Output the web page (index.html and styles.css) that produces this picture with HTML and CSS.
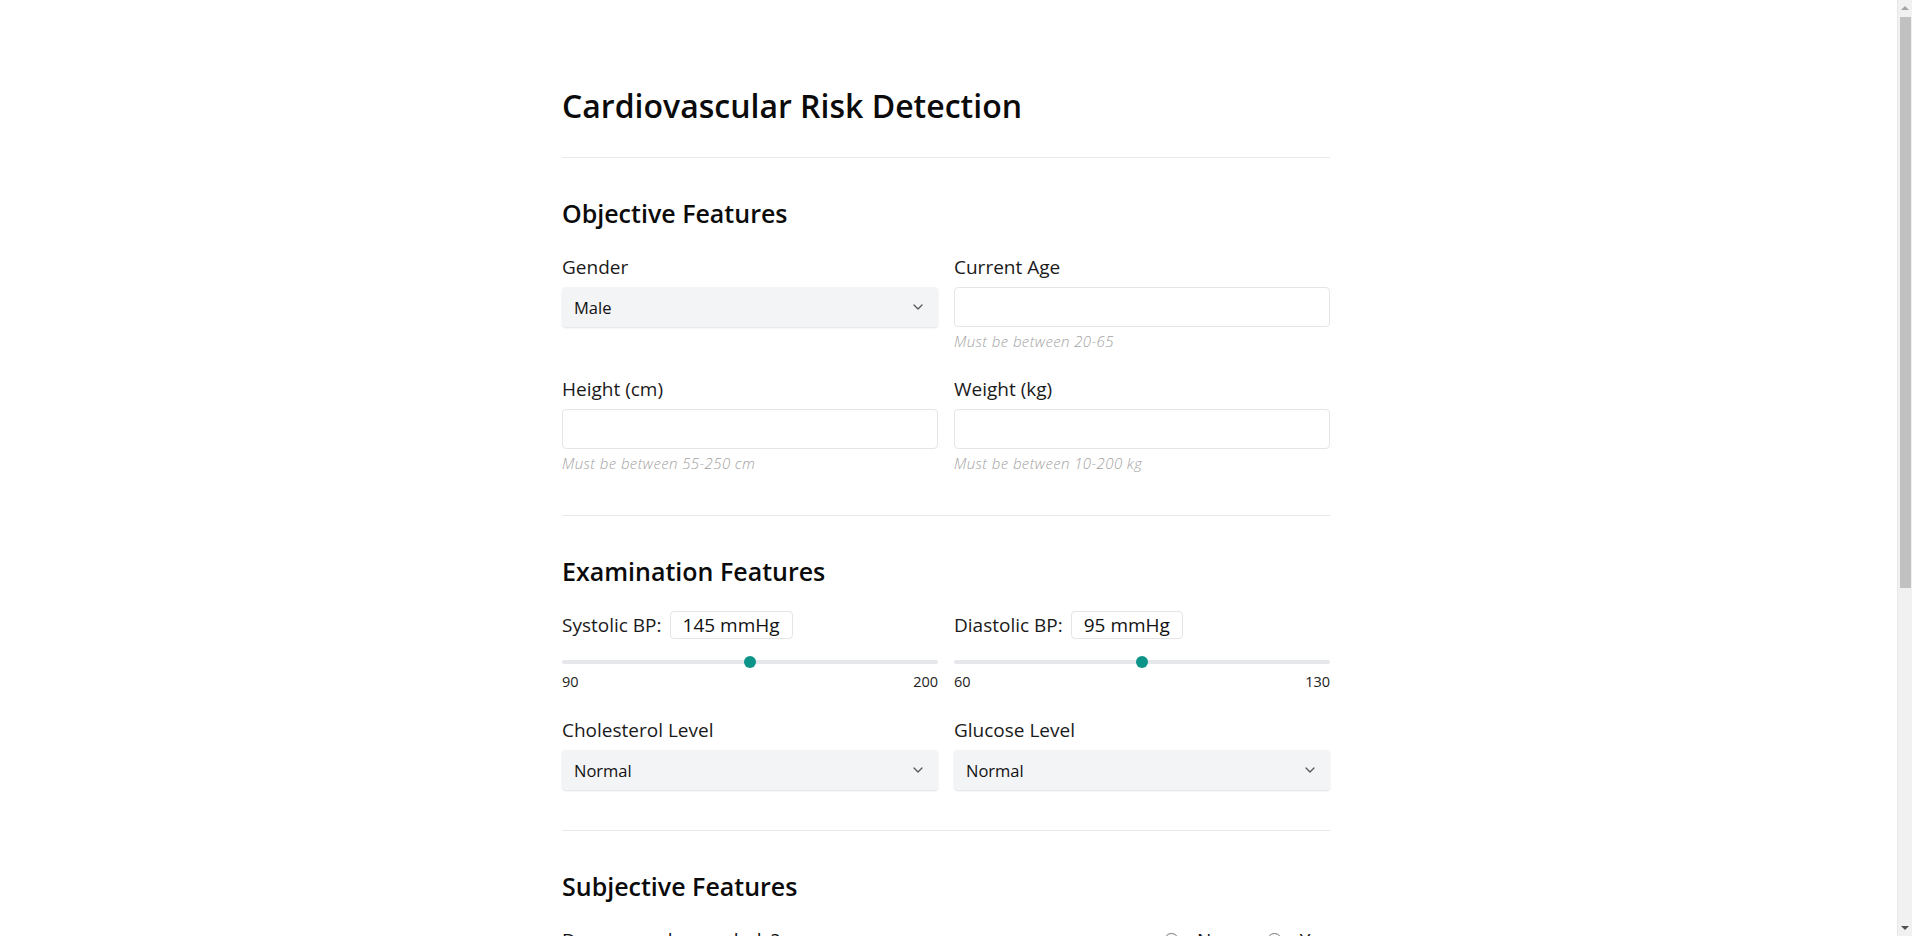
FILE: index.html
```html
<!DOCTYPE html>
<html lang="en">
<head>
<meta charset="utf-8">
<title>Cardiovascular Risk Detection</title>
<link rel="stylesheet" href="styles.css">
</head>
<body>
<main class="page">
  <h1 class="title">Cardiovascular Risk Detection</h1>
  <hr class="divider">

  <section class="section section-first">
    <h2 class="section-title">Objective Features</h2>
    <div class="grid">
      <div class="field">
        <label class="label" for="gender">Gender</label>
        <div class="select-wrap">
          <select id="gender" class="select"><option>Male</option><option>Female</option></select>
          <svg class="chevron" viewBox="0 0 20 20" width="16" height="16"><path d="M5 7.5l5 5 5-5" fill="none" stroke="currentColor" stroke-width="1.6" stroke-linecap="round" stroke-linejoin="round"/></svg>
        </div>
      </div>
      <div class="field">
        <label class="label" for="age">Current Age</label>
        <input id="age" class="input" type="text">
        <p class="hint">Must be between 20-65</p>
      </div>
      <div class="field">
        <label class="label" for="height">Height (cm)</label>
        <input id="height" class="input" type="text">
        <p class="hint">Must be between 55-250 cm</p>
      </div>
      <div class="field">
        <label class="label" for="weight">Weight (kg)</label>
        <input id="weight" class="input" type="text">
        <p class="hint">Must be between 10-200 kg</p>
      </div>
    </div>
  </section>
  <hr class="divider">

  <section class="section">
    <h2 class="section-title">Examination Features</h2>
    <div class="grid">
      <div class="field">
        <div class="bp-row">
          <span class="bp-label">Systolic BP:</span>
          <span class="bp-value">145 mmHg</span>
        </div>
        <input class="range" type="range" min="90" max="200" value="145">
        <div class="range-scale"><span>90</span><span>200</span></div>
      </div>
      <div class="field">
        <div class="bp-row">
          <span class="bp-label">Diastolic BP:</span>
          <span class="bp-value">95 mmHg</span>
        </div>
        <input class="range" type="range" min="60" max="130" value="95">
        <div class="range-scale"><span>60</span><span>130</span></div>
      </div>
      <div class="field">
        <label class="label" for="chol">Cholesterol Level</label>
        <div class="select-wrap">
          <select id="chol" class="select"><option>Normal</option><option>Above Normal</option><option>Well Above Normal</option></select>
          <svg class="chevron" viewBox="0 0 20 20" width="16" height="16"><path d="M5 7.5l5 5 5-5" fill="none" stroke="currentColor" stroke-width="1.6" stroke-linecap="round" stroke-linejoin="round"/></svg>
        </div>
      </div>
      <div class="field">
        <label class="label" for="gluc">Glucose Level</label>
        <div class="select-wrap">
          <select id="gluc" class="select"><option>Normal</option><option>Above Normal</option><option>Well Above Normal</option></select>
          <svg class="chevron" viewBox="0 0 20 20" width="16" height="16"><path d="M5 7.5l5 5 5-5" fill="none" stroke="currentColor" stroke-width="1.6" stroke-linecap="round" stroke-linejoin="round"/></svg>
        </div>
      </div>
    </div>
  </section>
  <hr class="divider">

  <section class="section">
    <h2 class="section-title">Subjective Features</h2>
    <div class="questions">
      <div class="question">
        <span class="q-text">Do you smoke regularly?</span>
        <div class="radios">
          <label class="radio"><input type="radio" name="smoke"><span>No</span></label>
          <label class="radio"><input type="radio" name="smoke"><span>Yes</span></label>
        </div>
      </div>
      <div class="question">
        <span class="q-text">Do you drink alcohol regularly?</span>
        <div class="radios">
          <label class="radio"><input type="radio" name="alco"><span>No</span></label>
          <label class="radio"><input type="radio" name="alco"><span>Yes</span></label>
        </div>
      </div>
      <div class="question">
        <span class="q-text">Are you physically active?</span>
        <div class="radios">
          <label class="radio"><input type="radio" name="active"><span>No</span></label>
          <label class="radio"><input type="radio" name="active"><span>Yes</span></label>
        </div>
      </div>
    </div>
  </section>
  <div class="actions">
    <button class="submit" type="button">Predict Risk</button>
  </div>
</main>
<div class="scrollbar" aria-hidden="true">
  <span class="sb-arrow sb-up"></span>
  <span class="sb-thumb"></span>
  <span class="sb-rest"></span>
  <span class="sb-arrow sb-down"></span>
</div>
</body>
</html>
```

FILE: styles.css
```css
* { box-sizing: border-box; }
html, body { margin: 0; padding: 0; background: #ffffff; }
body {
  font-family: "Open Sans", "Noto Sans", sans-serif;
  color: #111111;
  padding-right: 20px;
}
.page {
  max-width: 768px;
  margin: 0 auto;
  padding: 88px 0 120px;
}
.title {
  margin: 0 0 33px;
  font-size: 32px;
  line-height: 36px;
  font-weight: 600;
  color: #0b0b0b;
}
.divider {
  border: 0;
  border-top: 1px solid #e8e8e8;
  margin: 0;
}
.section {
  padding: 39px 0 40px;
}
.section-first { padding-bottom: 42px; }
.section-title {
  margin: 0 0 24px;
  font-size: 25px;
  line-height: 32px;
  font-weight: 600;
  color: #0b0b0b;
}
.grid {
  display: grid;
  grid-template-columns: 1fr 1fr;
  column-gap: 16px;
  row-gap: 24px;
}
.field { display: flex; flex-direction: column; min-width: 0; }
.label {
  font-size: 19px;
  line-height: 28px;
  color: #1a1a1a;
  margin-bottom: 6px;
}
.select-wrap { position: relative; }
.select {
  appearance: none;
  -webkit-appearance: none;
  width: 100%;
  height: 40px;
  border: 0;
  border-radius: 4px;
  background: #f3f4f6;
  box-shadow: 0 1px 2px rgba(0,0,0,0.12);
  padding: 0 40px 0 12px;
  font-family: inherit;
  font-size: 16.5px;
  color: #111;
  outline: none;
}
.chevron {
  position: absolute;
  right: 12px;
  top: 12px;
  color: #555;
  pointer-events: none;
}
.input {
  width: 100%;
  height: 40px;
  border: 1px solid #e5e5e5;
  border-radius: 4px;
  background: #fff;
  padding: 0 12px;
  font-family: inherit;
  font-size: 16px;
  outline: none;
}
.hint {
  margin: 4px 0 0;
  font-size: 15px;
  line-height: 20px;
  letter-spacing: 0.4px;
  font-style: italic;
  font-weight: 300;
  color: #a3a3a3;
}
.bp-row {
  display: flex;
  align-items: center;
  gap: 8px;
  height: 28px;
}
.bp-label { font-size: 19px; color: #1a1a1a; }
.bp-value {
  font-size: 19px;
  line-height: 26px;
  padding: 0 12px;
  border: 1px solid #e5e5e5;
  border-radius: 4px;
  color: #111;
}
.range {
  -webkit-appearance: none;
  appearance: none;
  width: 100%;
  height: 16px;
  margin: 15px 0 0;
  background: transparent;
}
.range::-webkit-slider-runnable-track {
  height: 4px;
  border-radius: 2px;
  background: #e5e7eb;
}
.range::-webkit-slider-thumb {
  -webkit-appearance: none;
  width: 12px;
  height: 12px;
  border-radius: 50%;
  background: #0d9488;
  margin-top: -4px;
  border: 0;
}
.range-scale {
  display: flex;
  justify-content: space-between;
  margin-top: 2px;
  font-size: 14.5px;
  line-height: 20px;
  color: #222;
}
.questions { display: flex; flex-direction: column; gap: 24px; }
.question {
  display: flex;
  justify-content: space-between;
  align-items: center;
  font-size: 19px;
  line-height: 28px;
}
.radios { display: flex; gap: 44px; }
.radio { display: flex; align-items: center; gap: 18px; }
.radio input { margin: 0; width: 15px; height: 15px; }
.actions { display: flex; justify-content: center; }
.submit {
  font-family: inherit;
  font-size: 16px;
  padding: 10px 24px;
  border: 0;
  border-radius: 6px;
  background: #0d9488;
  color: #fff;
}

/* decorative window scrollbar, as seen in the reference */
.scrollbar {
  position: fixed;
  top: 0;
  right: 0;
  bottom: 0;
  width: 15px;
  background: #f1f1f1;
  border-left: 1px solid #e8e8e8;
  display: flex;
  flex-direction: column;
  align-items: center;
}
.sb-arrow {
  width: 0;
  height: 0;
  border-left: 4px solid transparent;
  border-right: 4px solid transparent;
}
.sb-up {
  border-bottom: 4px solid #a3a3a3;
  margin-top: 6px;
  flex: 0 0 0;
  margin-bottom: 7px;
}
.sb-down {
  border-top: 4px solid #505050;
  flex: 0 0 0;
  margin-bottom: 6px;
  margin-top: 7px;
}
.sb-thumb {
  flex: 0 0 571px;
  width: 11px;
  background: #c1c1c1;
}
.sb-rest { flex: 1 1 auto; }
```
